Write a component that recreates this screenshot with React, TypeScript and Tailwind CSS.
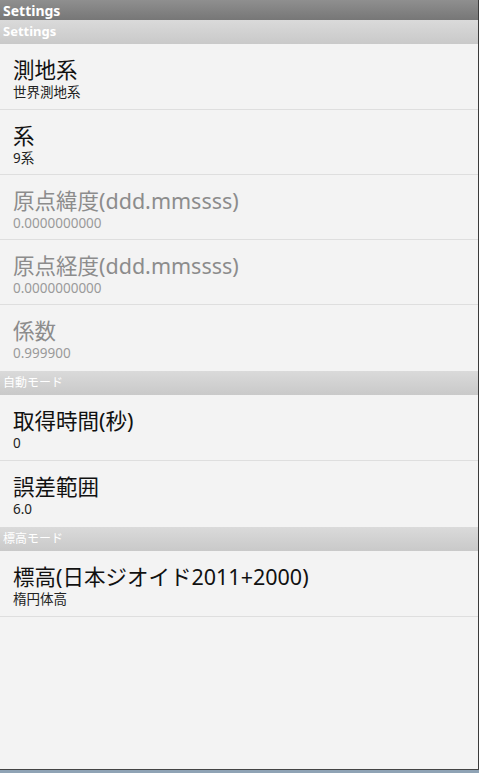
import React from "react";

type Pref = { title: string; summary: string; disabled?: boolean; h?: number };
type Group = { name: string; bold?: boolean; items: Pref[] };

const GROUPS: Group[] = [
  {
    name: "Settings",
    bold: true,
    items: [
      { title: "測地系", summary: "世界測地系" },
      { title: "系", summary: "9系", h: 65 },
      { title: "原点緯度(ddd.mmssss)", summary: "0.0000000000", disabled: true, h: 65 },
      { title: "原点経度(ddd.mmssss)", summary: "0.0000000000", disabled: true, h: 65 },
      { title: "係数", summary: "0.999900", disabled: true },
    ],
  },
  {
    name: "自動モード",
    items: [
      { title: "取得時間(秒)", summary: "0" },
      { title: "誤差範囲", summary: "6.0" },
    ],
  },
  {
    name: "標高モード",
    items: [{ title: "標高(日本ジオイド2011+2000)", summary: "楕円体高" }],
  },
];

const font = { fontFamily: '"Noto Sans", "Noto Sans CJK JP", sans-serif' };

function Header({ name, bold }: { name: string; bold?: boolean }) {
  return (
    <div
      className={`h-[24px] flex items-center pl-[3px] text-white bg-gradient-to-b from-[#dadada] to-[#c9c9c9] ${
        bold ? "text-[13px] font-bold" : "text-[12px]"
      }`}
    >
      {name}
    </div>
  );
}

function Item({ p, last }: { p: Pref; last: boolean }) {
  return (
    <div
      className={`${p.h === 65 ? "h-[65px]" : "h-[66px]"} flex flex-col pl-[13px] pt-[13px] ${
        last ? "" : "border-b border-[#dedede]"
      }`}
    >
      <div className={`text-[21.5px] leading-[26px] whitespace-nowrap ${p.disabled ? "text-[#8c8c8c]" : "text-[#111]"}`}>
        {p.title}
      </div>
      <div className={`text-[13.5px] leading-[18px] whitespace-nowrap ${p.disabled ? "text-[#9a9a9a]" : "text-[#222]"}`}>
        {p.summary}
      </div>
    </div>
  );
}

export default function App() {
  return (
    <div className="w-[479px] h-[773px] flex flex-col bg-[#f3f3f3] overflow-hidden" style={font}>
      <div className="flex flex-1 min-h-0">
        <div className="flex-1 flex flex-col">
          {/* title bar */}
          <div className="h-[20px] flex items-center pl-[3px] bg-gradient-to-b from-[#8f8f8f] to-[#777] text-white text-[14px] font-bold">
            Settings
          </div>
          {GROUPS.map((g) => (
            <div key={g.name}>
              <Header name={g.name} bold={g.bold} />
              {g.items.map((p, i) => (
                <Item key={p.title} p={p} last={i === g.items.length - 1 && g.name !== "標高モード"} />
              ))}
            </div>
          ))}
        </div>
        <div className="w-[1px] bg-[#3a3a3a]" />
      </div>
      <div className="h-[1px] bg-[#444]" />
      <div className="h-[3px] bg-[#8fa3b5]" />
    </div>
  );
}
